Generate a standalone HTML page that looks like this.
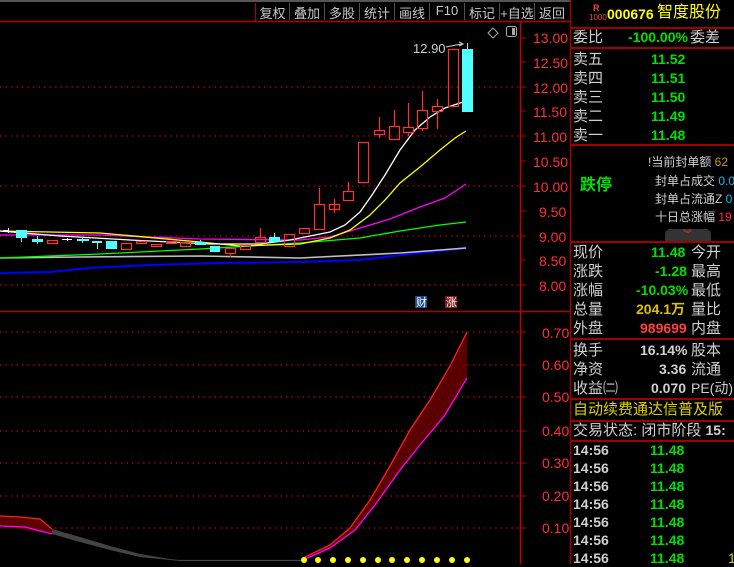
<!DOCTYPE html>
<html><head><meta charset="utf-8"><style>
*{margin:0;padding:0;box-sizing:border-box}
body{width:734px;height:564px;background:#000;overflow:hidden;position:relative;font-family:"Liberation Sans","Noto Sans CJK SC",sans-serif;color:#c0c0c0}
.t{position:absolute;white-space:nowrap;line-height:1}
.tb{position:absolute;top:3px;font-size:13px;color:#c8c8c8;text-align:center;height:16px}
.p{position:absolute;font-size:15px;line-height:19px;white-space:nowrap}
.g{color:#00e000;font-weight:bold}
.w{color:#d0d0d0}
.hl{position:absolute;left:570px;width:164px;height:2px;background:#a00000}
</style></head><body>
<svg width="734" height="564" style="position:absolute;left:0;top:0">
<rect x="0" y="0" width="570" height="2" fill="#555"/>
<line x1="0" y1="21.5" x2="570" y2="21.5" stroke="#b00000" stroke-width="1.5"/>
<line x1="255.5" y1="3" x2="255.5" y2="21" stroke="#b00000"/>
<g stroke="#505050"><line x1="289.5" y1="3" x2="289.5" y2="20"/><line x1="324.5" y1="3" x2="324.5" y2="20"/><line x1="359.5" y1="3" x2="359.5" y2="20"/><line x1="394.5" y1="3" x2="394.5" y2="20"/><line x1="429.5" y1="3" x2="429.5" y2="20"/><line x1="464.5" y1="3" x2="464.5" y2="20"/><line x1="499.5" y1="3" x2="499.5" y2="20"/><line x1="534.5" y1="3" x2="534.5" y2="20"/></g>
<line x1="520.5" y1="22" x2="520.5" y2="564" stroke="#c00000" stroke-width="1.5"/>
<line x1="570.5" y1="0" x2="570.5" y2="564" stroke="#a00000" stroke-width="1.5"/>
<line x1="0" y1="311.5" x2="570" y2="311.5" stroke="#b00000" stroke-width="1.5"/>
<g stroke="#c00000" stroke-dasharray="1.5,4" stroke-width="1.2">
<line x1="0" y1="87" x2="520" y2="87"/><line x1="0" y1="136" x2="520" y2="136"/><line x1="0" y1="186" x2="520" y2="186"/><line x1="0" y1="236" x2="520" y2="236"/><line x1="0" y1="285" x2="520" y2="285"/>
<line x1="0" y1="332" x2="520" y2="332"/><line x1="0" y1="365" x2="520" y2="365"/><line x1="0" y1="397" x2="520" y2="397"/><line x1="0" y1="431" x2="520" y2="431"/><line x1="0" y1="463" x2="520" y2="463"/><line x1="0" y1="496" x2="520" y2="496"/><line x1="0" y1="528" x2="520" y2="528"/>
</g>
<g stroke="#c00000"><line x1="520" y1="38" x2="526" y2="38"/><line x1="520" y1="62" x2="526" y2="62"/><line x1="520" y1="87" x2="526" y2="87"/><line x1="520" y1="111" x2="526" y2="111"/><line x1="520" y1="136" x2="526" y2="136"/><line x1="520" y1="161" x2="526" y2="161"/><line x1="520" y1="186" x2="526" y2="186"/><line x1="520" y1="211" x2="526" y2="211"/><line x1="520" y1="236" x2="526" y2="236"/><line x1="520" y1="260" x2="526" y2="260"/><line x1="520" y1="285" x2="526" y2="285"/>
<line x1="520" y1="332" x2="526" y2="332"/><line x1="520" y1="365" x2="526" y2="365"/><line x1="520" y1="397" x2="526" y2="397"/><line x1="520" y1="431" x2="526" y2="431"/><line x1="520" y1="463" x2="526" y2="463"/><line x1="520" y1="496" x2="526" y2="496"/><line x1="520" y1="528" x2="526" y2="528"/></g>
<g fill="#ff3030" font-family="Liberation Sans" font-size="14">
<text x="533" y="43">13.00</text><text x="533" y="68">12.50</text><text x="533" y="93">12.00</text><text x="533" y="117">11.50</text><text x="533" y="142">11.00</text><text x="533" y="167">10.50</text><text x="533" y="192">10.00</text><text x="539" y="217">9.50</text><text x="539" y="242">9.00</text><text x="539" y="266">8.50</text><text x="539" y="291">8.00</text>
<text x="542" y="338">0.70</text><text x="542" y="370">0.60</text><text x="542" y="402">0.50</text><text x="542" y="436">0.40</text><text x="542" y="468">0.30</text><text x="542" y="501">0.20</text><text x="542" y="533">0.10</text>
</g>
<g fill="none" stroke-width="1.3">
<polyline stroke="#0000ff" stroke-width="2" points="0,273 50,272 90,268 150,265 220,263 300,262 360,260 400,255 440,251 466,248"/>
<polyline stroke="#c0c0c0" stroke-width="1.6" points="0,258 80,257 200,256 300,258 400,253 440,250 466,248"/>
<polyline stroke="#00ff00" points="0,258 100,254 200,249 300,243 360,238 400,231 440,225 466,222"/>
<polyline stroke="#ff00ff" points="0,235 100,235 200,239 300,240 330,237 360,228 390,219 420,207 445,198 466,184"/>
<polyline stroke="#ffff00" points="0,231 100,233 200,242 240,246 300,244 330,238 350,230 370,215 385,200 400,183 420,167 440,150 455,138 466,131"/>
<polyline stroke="#ffffff" points="0,231 60,236 130,240 210,244 260,244 290,240 310,236 330,232 345,225 360,212 372,195 385,175 400,150 415,130 430,117 445,108 466,101"/>
</g>
<g stroke="#ff3030" fill="none" stroke-width="1.2">
<rect x="47.5" y="240.5" width="10" height="3"/><rect x="121.5" y="243.5" width="10" height="6"/><rect x="136.5" y="241.5" width="10" height="2"/><rect x="151.5" y="244.5" width="10" height="2"/><rect x="166.5" y="241.5" width="10" height="2"/><rect x="180.5" y="242.5" width="10" height="4"/><rect x="225.5" y="248.5" width="10" height="5"/><line x1="230.5" y1="253" x2="230.5" y2="257"/><rect x="240.5" y="245.5" width="10" height="4"/><rect x="255.5" y="237.5" width="10" height="5"/><line x1="260.5" y1="228" x2="260.5" y2="237"/><rect x="284.5" y="234.5" width="10" height="12"/>
<rect x="299.5" y="228.5" width="10" height="5"/><rect x="314.5" y="204.5" width="10" height="25"/><line x1="319.5" y1="188" x2="319.5" y2="204"/><rect x="329.5" y="204.5" width="10" height="5"/><line x1="334.5" y1="199" x2="334.5" y2="213"/><rect x="343.5" y="191.5" width="10" height="9"/><line x1="348.5" y1="182" x2="348.5" y2="191"/><rect x="358.5" y="142.5" width="10" height="40"/>
<rect x="374.5" y="130.5" width="10" height="4"/><line x1="379.5" y1="117" x2="379.5" y2="130"/><line x1="379.5" y1="134" x2="379.5" y2="138"/>
<rect x="389.5" y="126.5" width="10" height="13"/><line x1="394.5" y1="110" x2="394.5" y2="126"/>
<rect x="403.5" y="127.5" width="10" height="5"/><line x1="408.5" y1="103" x2="408.5" y2="127"/><line x1="408.5" y1="132" x2="408.5" y2="136"/>
<rect x="417.5" y="110.5" width="10" height="18"/><line x1="422.5" y1="91" x2="422.5" y2="110"/><line x1="422.5" y1="129" x2="422.5" y2="131"/>
<rect x="432.5" y="106.5" width="10" height="5"/><line x1="437.5" y1="99" x2="437.5" y2="106"/><line x1="437.5" y1="111" x2="437.5" y2="129"/>
<rect x="448.5" y="49.5" width="10" height="57"/>
</g>
<g fill="#50ffff">
<rect x="16" y="230" width="11" height="8"/><rect x="21" y="238" width="1" height="4"/><rect x="32" y="239" width="11" height="3"/><rect x="37" y="236" width="1" height="8"/><rect x="77" y="239" width="12" height="2"/><rect x="82" y="237" width="1" height="6"/><rect x="92" y="241" width="10" height="2"/><rect x="97" y="241" width="1" height="8"/><rect x="106" y="241" width="11" height="8"/><rect x="195" y="242" width="11" height="3"/><rect x="200" y="240" width="1" height="3"/><rect x="210" y="246" width="10" height="6"/><rect x="269" y="237" width="11" height="5"/><rect x="274" y="233" width="1" height="4"/>
<rect x="462" y="49" width="11" height="63"/><rect x="467" y="43" width="1" height="6"/>
</g>
<g fill="#fff"><rect x="3" y="230" width="6" height="1"/><rect x="8" y="228" width="1" height="5"/><rect x="62" y="239" width="10" height="1"/><rect x="67" y="238" width="1" height="3"/></g>
<text x="413" y="53" fill="#d0d0d0" font-size="13" font-family="Liberation Sans">12.90</text>
<polyline points="446,47 456,45 463,44" fill="none" stroke="#d0d0d0"/><path d="M459,42 l4,2 -4,2" fill="none" stroke="#d0d0d0"/>
<path d="M493,28 l5,5 -5,5 -5,-5z" fill="none" stroke="#aaa"/>
<rect x="506.5" y="26.5" width="10" height="10" rx="2" fill="none" stroke="#aaa"/><rect x="512" y="28" width="3" height="7" fill="#aaa"/>
<rect x="415" y="296" width="12" height="12" fill="#1c4a80"/><text x="416" y="306" font-size="11" fill="#fff" font-family="Noto Sans CJK SC">财</text>
<rect x="445" y="296" width="12" height="12" fill="#801818"/><text x="446" y="306" font-size="11" fill="#fff" font-family="Noto Sans CJK SC">涨</text>
<polygon fill="#5a0000" points="0,516 40,519 52,529 52,534 0,526"/>
<polyline fill="none" stroke="#ff2020" stroke-width="1.3" points="0,516 20,517 40,519 52,529"/>
<polyline fill="none" stroke="#ff00ff" stroke-width="1.3" points="0,526 25,527 52,534"/>
<polygon fill="#444" points="52,529 80,537 110,546 140,554 170,559 180,560 180,561 140,557 110,550 80,542 52,534"/>
<line x1="180" y1="560.5" x2="303" y2="560.5" stroke="#444" stroke-width="1.2"/>
<polygon fill="#5a0000" points="303,558 330,545 350,528 370,500 390,466 410,430 430,400 450,366 467,332 467,378 445,415 420,445 400,470 375,505 355,530 330,548 303,560"/>
<polyline fill="none" stroke="#ff2020" stroke-width="1.3" points="303,558 330,545 350,528 370,500 390,466 410,430 430,400 450,366 467,332"/>
<polyline fill="none" stroke="#ff00ff" stroke-width="1.3" points="303,560 330,548 355,530 375,505 400,470 420,445 445,415 467,378"/>
<g fill="#ffff00"><circle cx="304" cy="560" r="3"/><circle cx="318" cy="560" r="3"/><circle cx="333" cy="560" r="3"/><circle cx="348" cy="560" r="3"/><circle cx="363" cy="560" r="3"/><circle cx="378" cy="560" r="3"/><circle cx="392" cy="560" r="3"/><circle cx="407" cy="560" r="3"/><circle cx="422" cy="560" r="3"/><circle cx="437" cy="560" r="3"/><circle cx="452" cy="560" r="3"/><circle cx="467" cy="560" r="3"/></g>
</svg>
<div class="tb" style="left:256px;width:33px">复权</div><div class="tb" style="left:290px;width:34px">叠加</div><div class="tb" style="left:325px;width:34px">多股</div><div class="tb" style="left:360px;width:34px">统计</div><div class="tb" style="left:395px;width:34px">画线</div><div class="tb" style="left:430px;width:34px">F10</div><div class="tb" style="left:465px;width:34px">标记</div><div class="tb" style="left:500px;width:34px">+自选</div><div class="tb" style="left:535px;width:34px">返回</div>
<div class="t" style="left:593px;top:4px;font-size:9px;color:#ff4040;font-weight:bold">R</div>
<div class="t" style="left:589px;top:14px;font-size:8px;color:#ff4040">1000</div>
<div class="t" style="left:607px;top:7px;font-size:14px;color:#ffff00;font-weight:bold">000676</div>
<div class="t" style="left:657px;top:5px;font-size:16px;color:#ffff00">智度股份</div>
<div class="hl" style="top:27px"></div>
<div class="p w" style="left:573px;top:28px">委比</div><div class="p g" style="left:628px;top:28px;font-size:14px">-100.00%</div><div class="p w" style="left:690px;top:28px">委差</div>
<div class="hl" style="top:47px"></div>
<div class="p w" style="left:573px;top:50px">卖五</div><div class="p g" style="left:651px;top:50px;font-size:14px">11.52</div>
<div class="p w" style="left:573px;top:69px">卖四</div><div class="p g" style="left:651px;top:69px;font-size:14px">11.51</div>
<div class="p w" style="left:573px;top:88px">卖三</div><div class="p g" style="left:651px;top:88px;font-size:14px">11.50</div>
<div class="p w" style="left:573px;top:107px">卖二</div><div class="p g" style="left:651px;top:107px;font-size:14px">11.49</div>
<div class="p w" style="left:573px;top:126px">卖一</div><div class="p g" style="left:651px;top:126px;font-size:14px">11.48</div>
<div class="hl" style="top:144px"></div>
<div class="p" style="left:580px;top:176px;font-size:16px;color:#00e000;font-weight:bold">跌停</div>
<div class="p w" style="left:648px;top:153px;font-size:12px">!当前封单额 <span style="color:#c0a000">62</span></div>
<div class="p w" style="left:655px;top:172px;font-size:12px">封单占成交 <span style="color:#00c0ff">0.0</span></div>
<div class="p w" style="left:655px;top:190px;font-size:12px">封单占流通Z <span style="color:#00c0ff">0</span></div>
<div class="p w" style="left:655px;top:208px;font-size:12px">十日总涨幅 <span style="color:#ff3030">19</span></div>
<div style="position:absolute;left:665px;top:229px;width:46px;height:12px;background:#333;border-radius:5px 5px 0 0"></div>
<div class="t" style="left:683px;top:230px;font-size:9px;color:#ff3030">︾</div>
<div class="hl" style="top:241px"></div>
<div class="p w" style="left:573px;top:243px">现价</div><div class="p g" style="left:651px;top:243px;font-size:14px">11.48</div><div class="p w" style="left:691px;top:243px">今开</div>
<div class="p w" style="left:573px;top:262px">涨跌</div><div class="p g" style="left:655px;top:262px;font-size:14px">-1.28</div><div class="p w" style="left:691px;top:262px">最高</div>
<div class="p w" style="left:573px;top:281px">涨幅</div><div class="p g" style="left:636px;top:281px;font-size:14px">-10.03%</div><div class="p w" style="left:691px;top:281px">最低</div>
<div class="p w" style="left:573px;top:300px">总量</div><div class="p" style="left:636px;top:300px;font-size:14px;color:#e0c000;font-weight:bold">204.1万</div><div class="p w" style="left:691px;top:300px">量比</div>
<div class="p w" style="left:573px;top:319px">外盘</div><div class="p" style="left:640px;top:319px;font-size:14px;color:#ff4040;font-weight:bold">989699</div><div class="p w" style="left:691px;top:319px">内盘</div>
<div class="hl" style="top:338px"></div>
<div class="p w" style="left:573px;top:341px">换手</div><div class="p w" style="left:640px;top:341px;font-size:14px;font-weight:bold">16.14%</div><div class="p w" style="left:691px;top:341px">股本</div>
<div class="p w" style="left:573px;top:360px">净资</div><div class="p w" style="left:659px;top:360px;font-size:14px;font-weight:bold">3.36</div><div class="p w" style="left:691px;top:360px">流通</div>
<div class="p w" style="left:573px;top:379px">收益㈡</div><div class="p w" style="left:651px;top:379px;font-size:14px;font-weight:bold">0.070</div><div class="p w" style="left:691px;top:379px;font-size:14px">PE(动)</div>
<div class="hl" style="top:398px"></div>
<div class="p" style="left:573px;top:400px;color:#e0d000">自动续费通达信普及版</div>
<div class="hl" style="top:420px"></div>
<div class="p w" style="left:573px;top:421px">交易状态: 闭市阶段 <b style="font-size:14px">15:</b></div>
<div class="hl" style="top:440px"></div>
<div class="p" style="left:573px;top:441px;font-size:14px;line-height:18px;font-weight:bold"><span class="w">14:56</span></div><div class="p g" style="left:650px;top:441px;font-size:14px;line-height:18px">11.48</div>
<div class="p" style="left:573px;top:459px;font-size:14px;line-height:18px;font-weight:bold"><span class="w">14:56</span></div><div class="p g" style="left:650px;top:459px;font-size:14px;line-height:18px">11.48</div>
<div class="p" style="left:573px;top:477px;font-size:14px;line-height:18px;font-weight:bold"><span class="w">14:56</span></div><div class="p g" style="left:650px;top:477px;font-size:14px;line-height:18px">11.48</div>
<div class="p" style="left:573px;top:495px;font-size:14px;line-height:18px;font-weight:bold"><span class="w">14:56</span></div><div class="p g" style="left:650px;top:495px;font-size:14px;line-height:18px">11.48</div>
<div class="p" style="left:573px;top:513px;font-size:14px;line-height:18px;font-weight:bold"><span class="w">14:56</span></div><div class="p g" style="left:650px;top:513px;font-size:14px;line-height:18px">11.48</div>
<div class="p" style="left:573px;top:531px;font-size:14px;line-height:18px;font-weight:bold"><span class="w">14:56</span></div><div class="p g" style="left:650px;top:531px;font-size:14px;line-height:18px">11.48</div>
<div class="p" style="left:573px;top:549px;font-size:14px;line-height:18px;font-weight:bold"><span class="w">14:56</span></div><div class="p g" style="left:650px;top:549px;font-size:14px;line-height:18px">11.48</div><div class="p" style="left:728px;top:549px;font-size:14px;line-height:18px;color:#e0d000">1</div>
</body></html>
